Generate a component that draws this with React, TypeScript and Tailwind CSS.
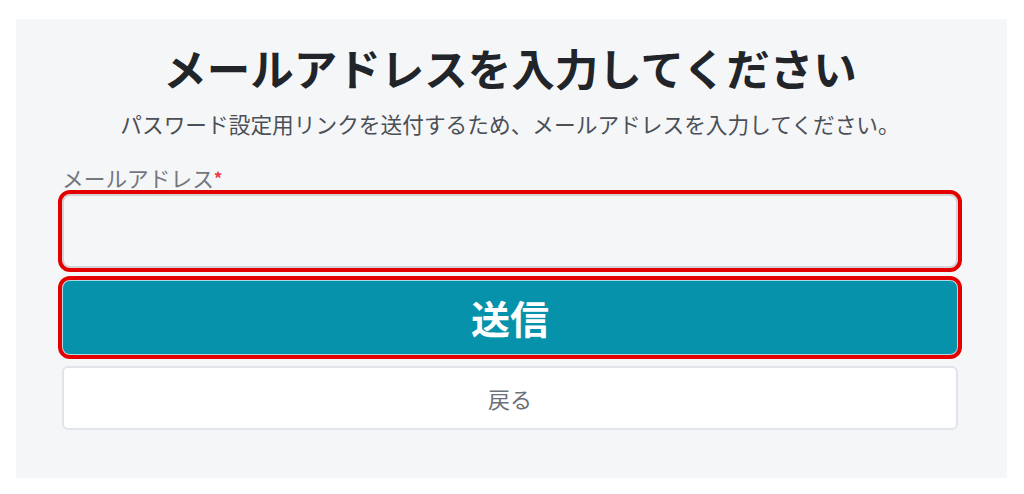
export default function App() {
  return (
    <div
      className="min-h-screen bg-white px-4 pt-[19px]"
      style={{ fontFamily: '"Noto Sans CJK JP", "Noto Sans", sans-serif' }}
    >
      <div className="w-[991px] bg-[#f5f6f8] pl-[46px] pr-[49px] pt-[22px] pb-[48px]">
        <h1 className="text-center text-[43.5px] leading-[54px] font-bold text-[#212529]">
          メールアドレスを入力してください
        </h1>
        <p className="mt-[12px] text-center text-[21.7px] leading-[33px] text-[#4b4f56]">
          パスワード設定用リンクを送付するため、メールアドレスを入力してください。
        </p>

        <form className="mt-[21px] flex flex-col" onSubmit={(e) => e.preventDefault()}>
          <label className="text-[21.7px] leading-[33px] text-[#74777d]">
            メールアドレス<span className="text-[#f0364a] text-[17px] font-bold align-top">*</span>
          </label>
          <input
            type="email"
            className="h-[74px] w-full rounded-lg border-2 border-[#d2d4d8] bg-[#f5f6f8] px-4 outline-4 outline-[#e50000]"
          />
          <button
            type="submit"
            className="mt-[12px] h-[75px] w-full rounded-lg border border-[#a9dbe4] bg-[#0792ab] text-[39px] font-bold text-white outline-4 outline-[#e50000]"
          >
            送信
          </button>
          <button
            type="button"
            className="mt-[11px] h-[64px] w-full rounded-md border-2 border-[#e1e4ea] bg-white text-[22px] text-[#6b7079]"
          >
            戻る
          </button>
        </form>
      </div>
    </div>
  );
}
